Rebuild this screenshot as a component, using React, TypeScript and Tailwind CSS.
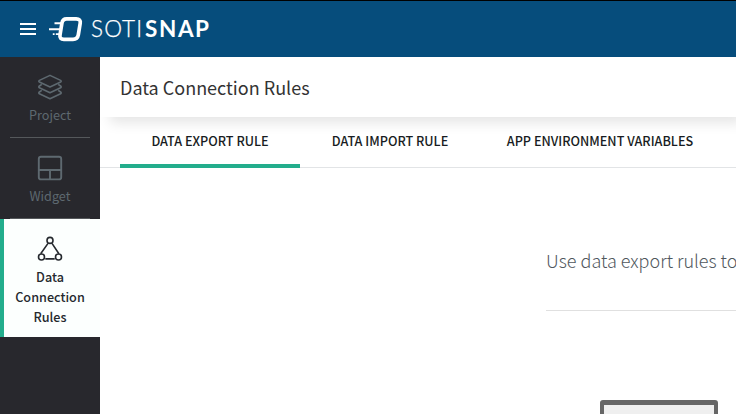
import type { ReactNode } from "react";

function Logo() {
  return (
    <svg className="ml-3 h-7 w-9 shrink-0" viewBox="0 0 36 28" fill="none" aria-hidden="true">
      <path d="M18.6 3.9H28.2Q32.9 3.9 32.2 8.2L30.3 19.9Q29.5 24.3 25 24.3H15.9Q11.3 24.3 12 20L13.9 8.3Q14.6 3.9 18.6 3.9Z" stroke="#fff" strokeWidth="3.7" />
      <path d="M6.5 8.3H13M1 14.3H12" stroke="#fff" strokeWidth="2" />
      <path d="M4.8 19.2H6.6M7.8 19.2H12" stroke="#fff" strokeWidth="1.8" />
    </svg>
  );
}

function NavIcon({ children }: { children: ReactNode }) {
  return (
    <svg className="h-7 w-7" viewBox="0 0 28 28" fill="none" stroke="currentColor" strokeWidth="1.6" strokeLinejoin="round" aria-hidden="true">
      {children}
    </svg>
  );
}

const labelFont = "font-['Noto_Sans_CJK_SC',sans-serif]";

export default function App() {
  return (
    <div className={`flex h-screen w-screen flex-col overflow-hidden bg-white ${labelFont}`}>
      <header className="flex h-[57px] shrink-0 items-center border-t border-black bg-[#064d7c] pl-5">
        <div className="flex w-4 flex-col gap-[3px]">
          <i className="h-0.5 bg-white" />
          <i className="h-0.5 bg-white" />
          <i className="h-0.5 bg-white" />
        </div>
        <Logo />
        <div className="ml-[7px] flex items-center font-['Lato',sans-serif] text-[22.5px] leading-none text-white">
          <span className="w-[54px] font-light tracking-[1.1px] [-webkit-text-stroke:0.25px_white]">SOTI</span>
          <span className="font-bold tracking-[1.6px]">SNAP</span>
        </div>
      </header>
      <div className="flex min-h-0 flex-1">
        <nav className="flex w-[100px] shrink-0 flex-col bg-[#28282d] text-center text-[12.65px] leading-5 text-[#5e6970]">
          <div className="mx-2.5 flex h-[81px] flex-col items-center border-b border-[#55585b] pt-4">
            <NavIcon>
              <path d="M14 2.4L24.6 7.4Q25.8 8.2 24.6 9L14 14L3.4 9Q2.2 8.2 3.4 7.4Z" />
              <path d="M5.8 11.3L3.4 13Q2.2 13.9 3.4 14.8L14 19.8L24.6 14.8Q25.8 13.9 24.6 13L22.2 11.3M5.8 17.3L3.4 19Q2.2 19.9 3.4 20.8L14 25.8L24.6 20.8Q25.8 19.9 24.6 19L22.2 17.3" />
            </NavIcon>
            <span className="mt-1">Project</span>
          </div>
          <div className="mx-2.5 flex h-[81px] flex-col items-center border-b border-[#55585b] pt-4">
            <NavIcon>
              <rect x="2.8" y="2.8" width="22.4" height="22.6" rx="2.2" strokeWidth="1.9" />
              <path d="M3 16H25M14 16V25" strokeWidth="1.9" />
            </NavIcon>
            <span className="mt-1">Widget</span>
          </div>
          <div className="flex h-[118px] flex-col items-center border-l-4 border-[#23ad8c] bg-[#fcfffe] pt-4 pr-1 font-medium text-[#25292e]">
            <NavIcon>
              <circle cx="14" cy="5.4" r="3" />
              <circle cx="5.5" cy="22" r="3" />
              <circle cx="22.5" cy="22" r="3" />
              <path d="M12 8.4L4.7 18.8M16 8.4L22.9 18.8M9.3 23.9H18.7" />
            </NavIcon>
            <span className="mt-1">Data<br />Connection<br />Rules</span>
          </div>
        </nav>
        <main className="flex min-w-0 flex-1 flex-col">
          <div className="z-10 flex h-[60px] shrink-0 items-center bg-white pl-5 shadow-[8px_8px_12px_-2px_rgba(0,0,0,0.1)]">
            <h1 className="text-[18px] leading-6 text-[#333]">Data Connection Rules</h1>
          </div>
          <div className="flex h-[51px] shrink-0 border-b border-[#e2e4e6] pl-5 text-[12.65px] leading-5 font-medium whitespace-nowrap text-[#181c22]">
            <div className="-mb-px w-[180px] border-b-4 border-[#23ad8c] pt-[14px] text-center">DATA EXPORT RULE</div>
            <div className="w-[180px] pt-[14px] text-center">DATA IMPORT RULE</div>
            <div className="w-[240px] pt-[14px] text-center">APP ENVIRONMENT VARIABLES</div>
          </div>
          <section className="ml-[446px] flex flex-col">
            <div className="h-[143px] border-b border-[#e0e0e0] pt-[78px]">
              <p className="text-[18px] leading-7 font-light whitespace-nowrap text-[#50575d]">Use data export rules to</p>
            </div>
            <div className="mt-[89px] ml-[54px] h-[60px] w-[118px] rounded-t-[3px] border-4 border-t-[5px] border-[#666] bg-[#efefef]" />
          </section>
        </main>
      </div>
    </div>
  );
}
